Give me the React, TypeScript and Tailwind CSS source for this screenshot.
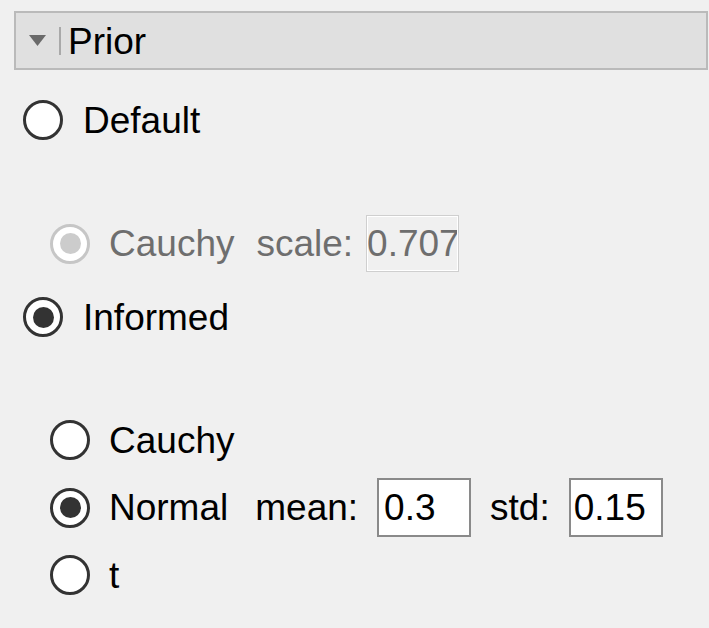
import React from 'react';

const Radio = ({ checked = false, disabled = false }: { checked?: boolean; disabled?: boolean }) => (
  <span
    className={`flex h-[40px] w-[40px] shrink-0 items-center justify-center rounded-full border-[3px] bg-white ${
      disabled ? 'border-[#c6c6c6]' : 'border-[#333333]'
    }`}
  >
    {checked && (
      <span
        className={`h-[21px] w-[21px] rounded-full ${disabled ? 'bg-[#cccccc]' : 'bg-[#333333]'}`}
      />
    )}
  </span>
);

const App = () => {
  return (
    <div
      className="h-[628px] w-[709px] overflow-hidden bg-[#f0f0f0] pt-[11px] text-[37px] leading-[1.15] text-black"
      style={{ fontFamily: '"Liberation Sans", Arial, sans-serif' }}
    >
      {/* section header */}
      <div className="ml-[14px] mr-px flex h-[59px] items-center border-2 border-[#bababa] bg-[#e0e0e0]">
        <svg width="17" height="11" viewBox="0 0 17 11" className="ml-[13px]">
          <path d="M0 0 L17 0 L8.5 11 Z" fill="#6a6a6a" />
        </svg>
        <span className="ml-[13px] h-[28px] w-[2px] bg-[#a9a9a9]" />
        <span className="ml-[7px] pt-[3px]">Prior</span>
      </div>

      {/* default */}
      <div className="ml-[23px] mt-[30px] flex h-[40px] items-center gap-[20px]">
        <Radio />
        <span className="pt-[2px]">Default</span>
      </div>

      <div className="ml-[50px] mt-[75px] flex h-[57px] items-center text-[#6e6e6e]">
        <Radio checked disabled />
        <span className="ml-[19px] pt-[2px]">Cauchy</span>
        <span className="ml-[22px] pt-[2px]">scale:</span>
        <span className="ml-[13px] flex h-[57px] w-[93px] items-center border border-[#cfcfcf] pl-0 pt-[2px] outline outline-1 -outline-offset-2 outline-white">
          0.707
        </span>
      </div>

      {/* informed */}
      <div className="ml-[23px] mt-[25px] flex h-[40px] items-center gap-[20px]">
        <Radio checked />
        <span className="pt-[2px]">Informed</span>
      </div>

      <div className="ml-[50px] mt-[83px] flex flex-col">
        <div className="flex h-[40px] items-center gap-[19px]">
          <Radio />
          <span className="pt-[2px]">Cauchy</span>
        </div>
        <div className="mt-[18px] flex h-[59px] items-center">
          <Radio checked />
          <span className="ml-[19px] pt-[2px]">Normal</span>
          <span className="ml-[27px] pt-[2px]">mean:</span>
          <span className="ml-[19px] flex h-[59px] w-[94px] items-center border-2 border-[#8a8a8a] bg-white pl-[5px] pt-[2px]">
            0.3
          </span>
          <span className="ml-[19px] pt-[2px]">std:</span>
          <span className="ml-[19px] flex h-[59px] w-[94px] items-center border-2 border-[#8a8a8a] bg-white pl-[3px] pt-[2px]">
            0.15
          </span>
        </div>
        <div className="mt-[18px] flex h-[40px] items-center gap-[19px]">
          <Radio />
          <span className="pt-[2px]">t</span>
        </div>
      </div>
    </div>
  );
};

export default App;
